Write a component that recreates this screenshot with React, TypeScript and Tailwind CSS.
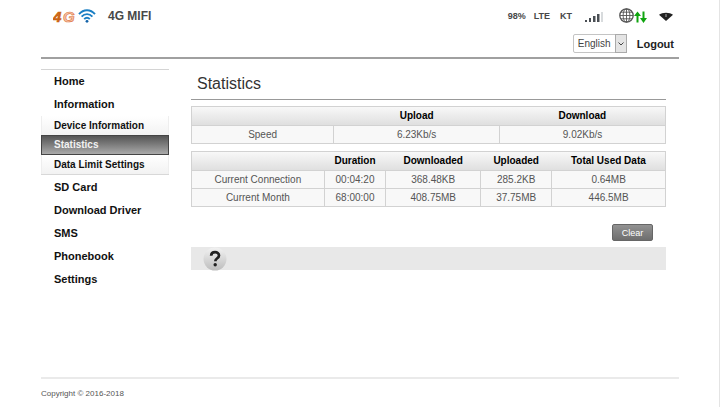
import React from 'react';

type MenuItem = {
  label: string;
  children?: string[];
};

const menu: MenuItem[] = [
  { label: 'Home' },
  { label: 'Information', children: ['Device Information', 'Statistics', 'Data Limit Settings'] },
  { label: 'SD Card' },
  { label: 'Download Driver' },
  { label: 'SMS' },
  { label: 'Phonebook' },
  { label: 'Settings' },
];

const usage = [
  { name: 'Current Connection', duration: '00:04:20', down: '368.48KB', up: '285.2KB', total: '0.64MB' },
  { name: 'Current Month', duration: '68:00:00', down: '408.75MB', up: '37.75MB', total: '446.5MB' },
];

const headRow = 'h-[19px] bg-linear-to-b from-[#f8f8f8] to-[#dedede] text-black';
const dataRow = 'bg-[#f8f8f8] text-[#555]';
const cell = 'h-[18px] border border-[#d2d2d2] p-0 text-center font-normal';

function Logo() {
  return (
    <div className="flex items-center gap-px">
      <svg width="24" height="18" viewBox="0 0 24 18" aria-label="4G" role="img">
        <text x="0" y="15" fontSize="15" fontWeight="bold" fontStyle="italic" fill="#cb6414" stroke="#cb6414" strokeWidth="0.7">4</text>
        <text x="10" y="15" fontSize="15" fontWeight="bold" fontStyle="italic" fill="#f6c5aa" stroke="#e07a48" strokeWidth="0.7">G</text>
      </svg>
      <svg width="18" height="14" viewBox="0 0 18 14" fill="none" stroke="#1b7fc4" strokeWidth="1.9" aria-hidden="true">
        <path d="M1 5.2C5.5 0 12.500 0 17 5.200" />
        <path d="M3.600 7.700C6.700 4.300 11.300 4.300 14.400 7.700" />
        <path d="M6.200 10.100C7.900 8.300 10.100 8.300 11.800 10.100" />
        <circle cx="9" cy="12.300" r="1.400" fill="#1262a8" stroke="none" />
      </svg>
    </div>
  );
}

function SignalIcon() {
  return (
    <svg width="19" height="12" viewBox="0 0 19 12" fill="#4a4f54" aria-hidden="true">
      <rect x="1" y="10" width="2" height="2" />
      <rect x="5" y="8" width="2" height="4" />
      <rect x="9" y="6" width="2.500" height="6" />
      <rect x="13" y="4" width="2.500" height="8" />
      <rect x="17" y="2" width="2" height="10" fill="#d8dbdd" />
    </svg>
  );
}

function NetworkIcon() {
  return (
    <svg width="28" height="16" viewBox="0 0 28 16" fill="none" aria-hidden="true">
      <g stroke="#555" strokeWidth="0.9">
        <circle cx="7.500" cy="7.500" r="6.700" strokeWidth="1.300" />
        <ellipse cx="7.500" cy="7.500" rx="3.400" ry="6.700" />
        <path d="M7.500 1V14M1 7.500H14M2 4.200H13M2 10.800H13" />
      </g>
      <g stroke="#10a510" strokeWidth="2">
        <path d="M18.500 14.500V5M24.500 3.500V12" />
      </g>
      <path d="M15 8L18.500 3.500L22 8ZM21 10L24.500 15L28 10Z" fill="#10a510" />
    </svg>
  );
}

function WifiIcon() {
  return (
    <svg width="14" height="9" viewBox="0 0 14 9" aria-hidden="true">
      <path d="M0 2.800C3 0 11 0 14 2.800L7 9Z" fill="#222" />
      <path d="M7 2V5" stroke="#aaa" strokeWidth="1" />
    </svg>
  );
}

function HelpIcon() {
  return (
    <svg width="24" height="24" viewBox="0 0 24 24" aria-hidden="true">
      <defs>
        <linearGradient id="help" x1="0" y1="0" x2="0" y2="1">
          <stop offset="0" stopColor="#f2f2f2" />
          <stop offset="1" stopColor="#bdbdbd" />
        </linearGradient>
      </defs>
      <circle cx="12" cy="12" r="11.500" fill="url(#help)" />
      <path d="M8.200 8.800C8.200 3.800 16 4 16 8.500C16 11.500 12.300 11 12.300 14.300" fill="none" stroke="#222" strokeWidth="2.700" />
      <circle cx="12.200" cy="17.700" r="1.700" fill="#222" />
    </svg>
  );
}

export default function App() {
  const [active, setActive] = React.useState('Statistics');
  const [language, setLanguage] = React.useState('English');

  return (
    <div className="flex min-h-screen flex-col border-r border-[#e4e4e4] bg-white pr-10 pl-[41px] font-['Liberation_Sans',Arial,sans-serif]">
      <header className="border-b-2 border-[#a0a0a0] pt-2 pb-1">
        <div className="flex h-4 items-center">
          <div className="flex items-center gap-3 pl-3">
            <Logo />
            <h1 className="text-[12px] leading-4 font-bold text-[#484848]">4G MIFI</h1>
          </div>
          <div className="ml-auto flex items-center pr-1.5 text-[9px] leading-4 font-bold text-[#484848]">
            <span className="mr-2">98%</span>
            <span className="mr-2.5">LTE</span>
            <span className="mr-3">KT</span>
            <span className="mr-4"><SignalIcon /></span>
            <span className="mr-3"><NetworkIcon /></span>
            <WifiIcon />
          </div>
        </div>
        <div className="mt-2.5 flex items-center justify-end gap-2.5 pr-[5px]">
          <div className="relative">
            <select
              aria-label="Language"
              className="block h-[19px] w-[54px] appearance-none rounded-xs border border-[#c4c4c4] bg-white pl-1 text-[10px] text-[#444]"
              value={language}
              onChange={(e) => setLanguage(e.target.value)}
            >
              <option>English</option>
              <option>中文</option>
            </select>
            <span className="pointer-events-none absolute inset-y-0 right-0 flex w-3 items-center justify-center border border-[#aaa] bg-[#e4e4e4]">
              <svg width="6" height="4" viewBox="0 0 6 4" fill="none" stroke="#444" aria-hidden="true">
                <path d="M.5 .5L3 3L5.500 .5" />
              </svg>
            </span>
          </div>
          <a href="#logout" className="text-[11px] leading-4 font-bold text-[#222]">Logout</a>
        </div>
      </header>

      <main className="flex pt-2.5">
        <nav className="w-32 shrink-0 border-t border-[#d4d4d4] text-[11px] font-bold text-[#111]">
          {menu.map((item) => (
            <div key={item.label}>
              <a href="#menu" className="block pl-[13px] leading-[23px]">{item.label}</a>
              {item.children && (
                <div className="mb-px border-b border-[#d8d8d8] text-[10px]">
                  {item.children.map((child) => (
                    <button
                      key={child}
                      onClick={() => setActive(child)}
                      className={
                        active === child
                          ? 'block h-5 w-full border border-[#444] bg-linear-to-b from-[#555] to-[#aaa] pl-3 text-left leading-[18px] text-[#f2f2f2]'
                          : 'block h-[19px] w-full border-x border-[#eee] bg-linear-to-b from-white to-[#f2f2f2] pl-3 text-left leading-[19px]'
                      }
                    >
                      {child}
                    </button>
                  ))}
                </div>
              )}
            </div>
          ))}
        </nav>

        <section className="mr-[13px] ml-[22px] min-w-0 flex-1 text-[10px]">
          <h2 className="border-b border-[#999] pt-1 pb-[5px] pl-1.5 text-[16px] leading-[21px] text-[#333]">Statistics</h2>

          <table className="mt-1.5 w-full table-fixed border-collapse border border-[#d2d2d2] leading-[14px]">
            <thead>
              <tr className={headRow}>
                <th className="w-[30%] p-0" />
                <th className="p-0">Upload</th>
                <th className="p-0">Download</th>
              </tr>
            </thead>
            <tbody>
              <tr className={dataRow}>
                <th className={cell}>Speed</th>
                <td className={cell}>6.23Kb/s</td>
                <td className={cell}>9.02Kb/s</td>
              </tr>
            </tbody>
          </table>

          <table className="mt-[7px] w-full table-fixed border-collapse border border-[#d2d2d2] leading-[14px]">
            <thead>
              <tr className={headRow}>
                <th className="w-[28%] p-0" />
                <th className="w-[13%] p-0">Duration</th>
                <th className="w-[20%] p-0">Downloaded</th>
                <th className="w-[15%] p-0">Uploaded</th>
                <th className="p-0">Total Used Data</th>
              </tr>
            </thead>
            <tbody>
              {usage.map((row) => (
                <tr key={row.name} className={dataRow}>
                  <th className={cell}>{row.name}</th>
                  <td className={cell}>{row.duration}</td>
                  <td className={cell}>{row.down}</td>
                  <td className={cell}>{row.up}</td>
                  <td className={cell}>{row.total}</td>
                </tr>
              ))}
            </tbody>
          </table>

          <div className="flex justify-end pt-[17px] pr-[13px]">
            <button className="h-[17px] w-[41px] rounded-xs border border-[#666] bg-linear-to-b from-[#929292] to-[#6e6e6e] text-[9px] leading-[14px] text-white">
              Clear
            </button>
          </div>

          <div className="mt-1.5 flex h-[23px] items-center bg-[#e8e8e8] pl-3">
            <button aria-label="Help">
              <HelpIcon />
            </button>
          </div>
        </section>
      </main>

      <footer className="mt-auto border-t-2 border-[#eaeaea] pt-2 pb-1.5 text-[8px] leading-[14px] text-[#555]">
        Copyright © 2016-2018
      </footer>
    </div>
  );
}
